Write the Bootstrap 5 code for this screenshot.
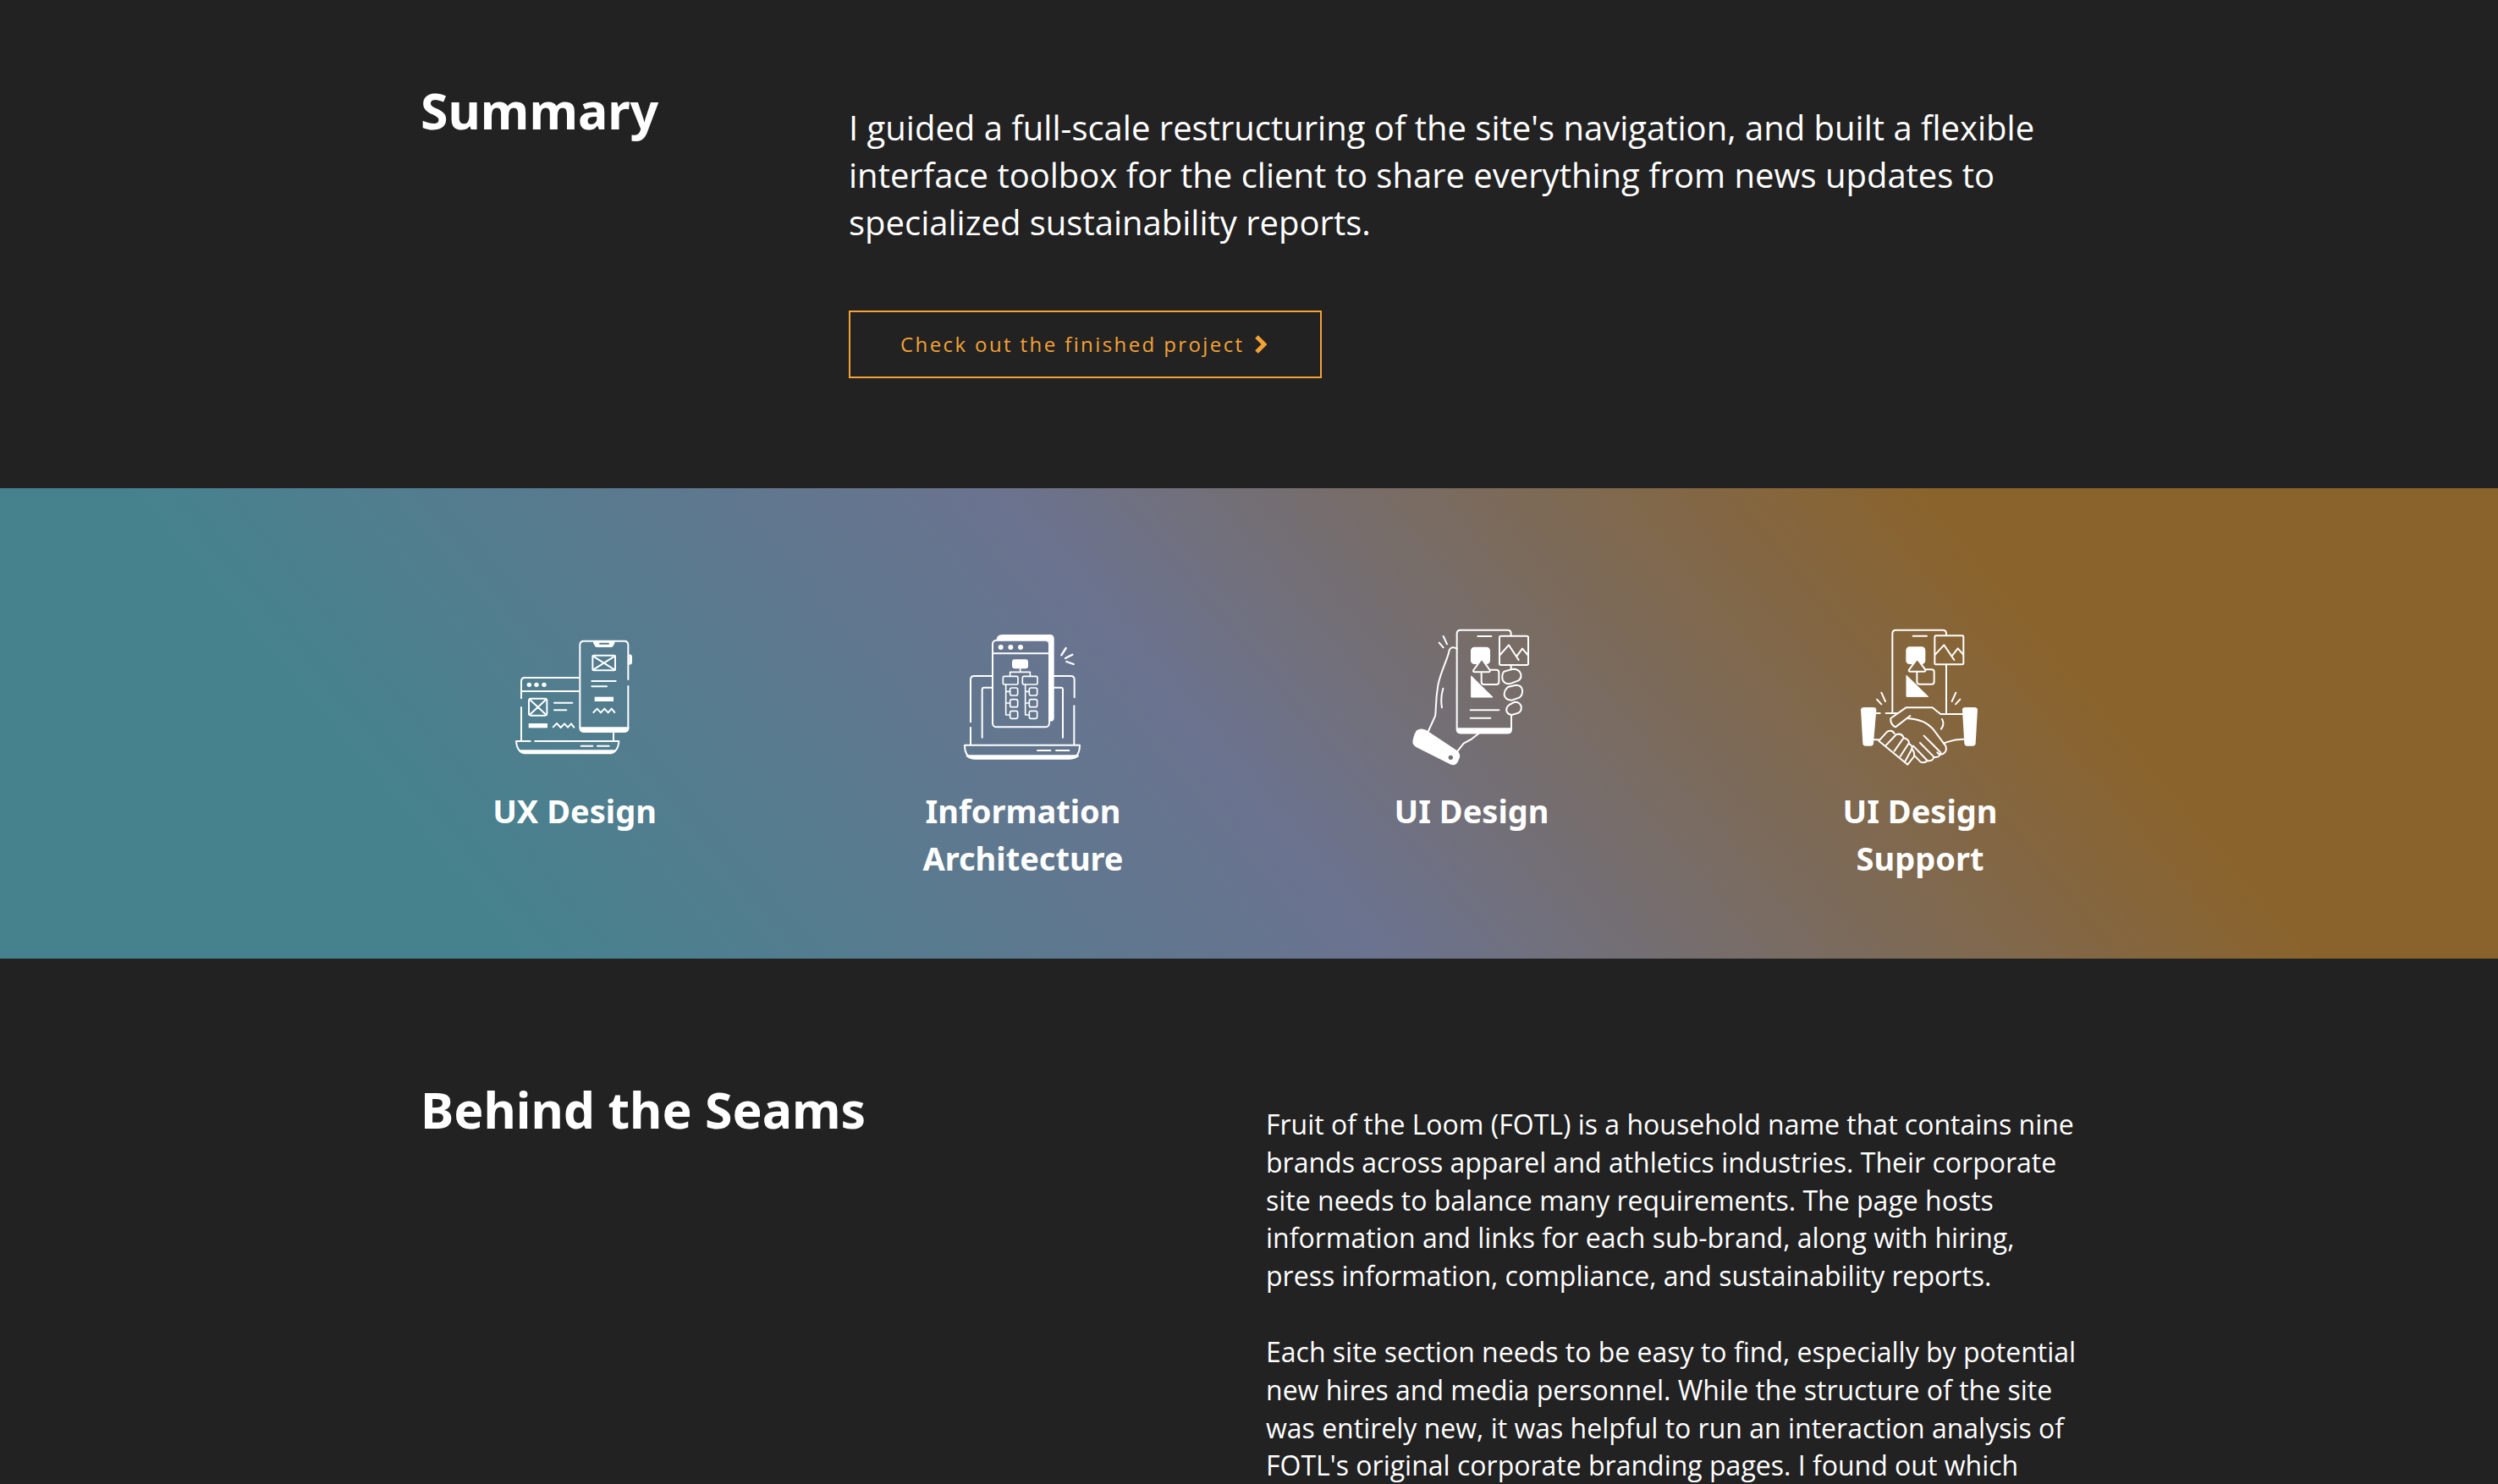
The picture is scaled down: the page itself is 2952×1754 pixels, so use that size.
<!DOCTYPE html>
<html lang="en">
<head>
<meta charset="utf-8">
<meta name="viewport" content="width=device-width, initial-scale=1">
<title>Fruit of the Loom case study</title>
<link href="https://cdn.jsdelivr.net/npm/bootstrap@5.3.0/dist/css/bootstrap.min.css" rel="stylesheet">
<style>
body { background: #222; color: #fff; font-family: "Open Sans", sans-serif; overflow-x: hidden; }
.wrap-main { max-width: 1958px; }
.wrap-skills { max-width: 2124px; }
.section-title { font-family: "Noto Sans", sans-serif; font-weight: 700; font-size: 59px; line-height: 80px; }
.summary-section { padding: 90px 0 130px; }
.summary-title { flex: 0 0 506px; }
.summary-body { padding-top: 33px; }
.intro-text { font-size: 40px; line-height: 56px; max-width: 1440px; margin-bottom: 76px; }
.btn-project { --bs-btn-color: #f4a236; --bs-btn-border-color: #f4a236; --bs-btn-hover-bg: #f4a236; --bs-btn-hover-color: #222; --bs-btn-border-width: 2px; --bs-btn-border-radius: 0; --bs-btn-font-size: 24px; --bs-btn-line-height: 32px; --bs-btn-padding-x: 59px; --bs-btn-padding-y: 22px; letter-spacing: .1em; gap: 12px; }
.skills-band { background: linear-gradient(50deg, #46828e 18%, #6b738f 48%, #8a632c 80%); padding: 153px 0 91px; }
.skill-icon { width: 180px; height: 190px; fill: none; stroke: #fff; stroke-width: 6; stroke-linecap: round; stroke-linejoin: round; }
.skill-icon .solid { fill: #fff; }
.skill-icon .cutout { fill: #77706c; }
.skill-icon .cutout-warm { fill: #856844; }
.skill-icon .thin { stroke-width: 5; }
.skill-label { font-family: "Noto Sans", sans-serif; font-weight: 700; font-size: 38px; line-height: 56px; max-width: 320px; margin: 10px auto 0; }
.behind-section { padding: 138px 0 0; }
.behind-title { flex: 0 0 999px; }
.behind-body { padding-top: 36px; font-size: 32px; line-height: 1.4; }
.behind-body p { margin-bottom: 45px; }
@media (max-width: 1600px) { .summary-title, .behind-title { flex-basis: 100%; } }
</style>
</head>
<body>
<main>
<section class="summary-section">
  <div class="container-fluid px-0 wrap-main d-flex flex-wrap flex-xxl-nowrap">
    <h2 class="section-title summary-title mb-0">Summary</h2>
    <div class="summary-body flex-grow-1">
      <p class="intro-text">I guided a full-scale restructuring of the site's navigation, and built a flexible interface toolbox for the client to share everything from news updates to specialized sustainability reports.</p>
      <a class="btn btn-project d-inline-flex align-items-center" href="#">Check out the finished project
        <svg class="me-1" width="14" height="22" viewBox="0 0 14 22" aria-hidden="true"><path d="M2 2L11 11L2 20" fill="none" stroke="currentColor" stroke-width="5"/></svg></a>
    </div>
  </div>
</section>

<section class="skills-band">
  <div class="container-fluid ps-0 pe-1 wrap-skills">
    <div class="row g-0 text-center">
      <div class="col-6 col-xl-3">
        <svg class="skill-icon" viewBox="-3 0 540 570" aria-hidden="true">
          <path d="M78 286V226q0-13 13-13H284M78 261H284M78 318V438M405 405V438M110 438H60q3 42 34 42H390q31 0 34-42H127M290 455H331M348 455H389"/>
          <path class="solid" d="M72 472H411q-7 9-21 9H94q-14 0-22-9Z"/>
          <g class="solid" stroke="none"><circle cx="106" cy="238" r="8"/><circle cx="132" cy="238" r="8"/><circle cx="159" cy="238" r="8"/><rect x="104" y="375" width="67" height="16"/><rect x="338" y="281" width="67" height="16"/><path d="M284 388H460V394q-2 13-14 13H298q-12 0-14-13ZM460 130q11 0 11 10V158q0 9-11 9ZM333 84H409V91l-4 8q-2 6-9 6H347q-7 0-9-6l-5-10Z"/></g>
          <path stroke="#537c8e" d="M357 92H387"/>
          <path d="M457 219V97q0-14-14-14H300q-14 0-14 14V390q0 14 14 14H443q14 0 14-14V243"/>
          <rect x="105" y="287" width="64" height="60" rx="7"/><path d="M108 290L166 344M166 290L108 344M195 302H259M195 328H238M191 388L204 375 218 390 231 376 243 389 255 376 265 389"/>
          <rect x="331" y="134" width="80" height="53" rx="3"/><path d="M333 137L409 185M409 137L333 185M328 225H413M328 244H381M334 336L347 323 360 337 373 323 386 337 398 323 409 336"/>
        </svg>
        <h3 class="skill-label">UX Design</h3>
      </div>
      <div class="col-6 col-xl-3">
        <svg class="skill-icon" viewBox="-3 0 540 570" aria-hidden="true">
          <path d="M81 370V220q0-13 13-13H156M81 390V450M122 425V255q0-7 7-7H156M376 207H436q13 0 13 13V283M448 313V450M376 248H401q7 0 7 7V425M60 452H468q0 47-39 47H99q-39 0-39-47ZM318 471H364M384 471H430"/>
          <path class="solid" d="M68 490H462q-10 10-33 10H99q-22 0-31-10Z"/>
          <path class="solid" stroke="none" d="M172 82q1-22 22-22H362q15 0 15 16V356q0 12-14 12V96q0-17-17-17Z"/>
          <rect x="159" y="80" width="201" height="308" rx="14"/><path d="M159 127H360"/>
          <g class="solid" stroke="none"><circle cx="188" cy="105" r="9"/><circle cx="223" cy="105" r="9"/><circle cx="258" cy="105" r="9"/><rect x="228" y="148" width="57" height="33" rx="9"/></g>
          <g class="thin"><path d="M257 180V193M221 207V193H292V207M206 237V345H220M206 262H220M206 303H220M275 237V345H288M275 262H288M275 303H288"/><rect x="196" y="208" width="53" height="29" rx="5"/><rect x="265" y="208" width="53" height="29" rx="5"/><rect x="221" y="249" width="27" height="27" rx="6"/><rect x="221" y="290" width="27" height="27" rx="6"/><rect x="221" y="331" width="27" height="27" rx="6"/><rect x="289" y="249" width="28" height="27" rx="6"/><rect x="289" y="290" width="28" height="27" rx="6"/><rect x="289" y="331" width="28" height="27" rx="6"/></g>
          <path stroke-width="7" d="M403 133L419 108M417 144L442 131M421 156L446 165"/>
        </svg>
        <h3 class="skill-label">Information Architecture</h3>
      </div>
      <div class="col-6 col-xl-3">
        <svg class="skill-icon" viewBox="-3 0 540 570" aria-hidden="true">
          <path d="M407 62V57q0-13-13-13H228q-13 0-13 13V396q0 13 13 13H396q12 0 12-13V346M407 170V182M289 66H337M263 328H364M263 356H334"/>
          <path class="solid" d="M217 394H406q0 15-12 15H229q-12 0-12-15Z"/>
          <rect x="366" y="65" width="102" height="103" rx="5"/><path d="M368 132L399 97 434 150M427 137L447 110 466 132"/>
          <rect class="solid" x="267" y="107" width="63" height="55" rx="10"/>
          <rect x="302" y="185" width="62" height="52" rx="9"/>
          <path class="cutout" d="M303 146L332 186q2 7-5 7H278q-7 0-4-7Z"/>
          <path class="solid" stroke-width="3" d="M266 208V282H341Z"/>
          <path d="M215 110q-19-11-27 5C184 145 157 190 148 240C138 300 142 330 138 349L114 402M166 251Q156 285 162 319M152 89L167 106M167 66L180 94M293 410L268 430 239 446 216 475"/>
          <path d="M382 191L414 182q21 0 27 16 5 17-8 25L402 235q-21 0-25-15-4-18 5-29ZM396 246L424 239q20 0 23 17 2 18-10 27L410 293q-20 0-26-15-5-16 12-32ZM401 309L420 299q18 0 23 15 2 18-10 24L410 345q-15-2-19-14-2-14 10-22Z"/>
          <path class="solid" d="M74 402q14-9 32 0L211 472q14 9 11 23L214 513q-8 11-23 3L73 457q-17-10-10-27 4-18 11-28Z"/>
          <circle cx="193" cy="496" r="8" fill="#706f73" stroke="none"/>
        </svg>
        <h3 class="skill-label">UI Design</h3>
      </div>
      <div class="col-6 col-xl-3">
        <svg class="skill-icon" viewBox="-3 0 540 570" aria-hidden="true">
          <path d="M169 338V57q0-13 13-13H347q13 0 13 13V62M360 168V338M242 65H291"/>
          <rect x="319" y="64" width="102" height="102" rx="4"/><path d="M321 131L352 97 388 150M381 135L401 109 420 131"/>
          <rect class="solid" x="220" y="106" width="63" height="56" rx="10"/>
          <rect x="256" y="184" width="61" height="52" rx="9"/>
          <path class="cutout-warm" d="M257 146L286 185q2 6-5 6H231q-6 0-3-6Z"/>
          <path class="solid" stroke-width="3" d="M219 206V280H295Z"/>
          <path d="M114 290L130 307M130 266L144 297M394 266L380 297M409 290L393 307"/>
          <path class="solid" d="M60 325q2-4 8-4H101q8 0 8 7L99 445q-1 7-7 7H73q-6 0-6-7ZM468 325q-2-4-8-4H427q-8 0-7 7L427 445q1 7 7 7H455q6 0 6-7Z"/>
          <path d="M108 339H125M146 339H187M103 433H121M418 342H340L311 319H217L163 357Q161 379 180 388L232 348M222 357Q282 360 313 395L358 455q6 20-10 28-13 5-20-5M345 360Q355 377 342 395M350 446C375 438 385 430 423 431"/>
          <path d="M121 437L151 404q18-8 25 7M121 437L223 521 246 492M147 452L183 414q20-5 26 12L176 473M209 427q18 4 19 17L197 492M228 447q13 8 11 17L214 510M236 466q12 6 10 23M281 419L340 478q-2 20-24 16L267 444M316 494q-2 16-23 13L243 455M293 507q-9 10-24 5L246 488"/>
        </svg>
        <h3 class="skill-label">UI Design Support</h3>
      </div>
    </div>
  </div>
</section>

<section class="behind-section">
  <div class="container-fluid px-0 wrap-main d-flex flex-wrap flex-xxl-nowrap">
    <h2 class="section-title behind-title mb-0">Behind the Seams</h2>
    <div class="behind-body">
      <p>Fruit of the Loom (FOTL) is a household name that contains nine brands across apparel and athletics industries. Their corporate site needs to balance many requirements. The page hosts information and links for each sub-brand, along with hiring, press information, compliance, and sustainability reports.</p>
      <p class="mb-0">Each site section needs to be easy to find, especially by potential new hires and media personnel. While the structure of the site was entirely new, it was helpful to run an interaction analysis of FOTL's original corporate branding pages. I found out which</p>
    </div>
  </div>
</section>
</main>
<script src="https://cdn.jsdelivr.net/npm/bootstrap@5.3.0/dist/js/bootstrap.bundle.min.js"></script>
</body>
</html>
